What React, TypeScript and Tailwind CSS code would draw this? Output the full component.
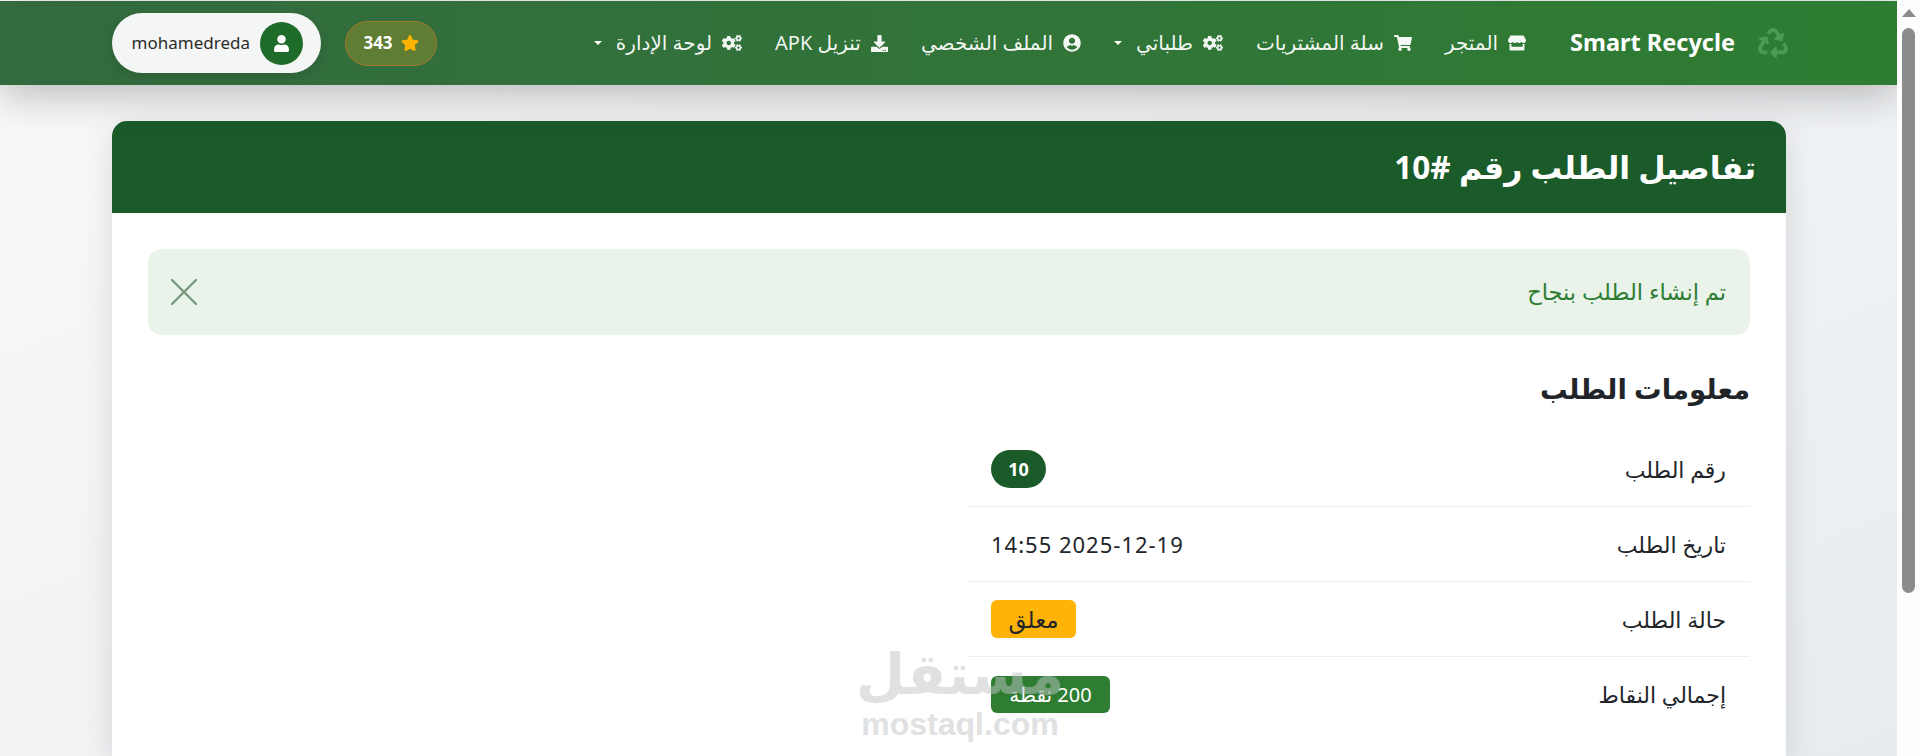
import { FaCogs, FaDownload, FaRecycle, FaShoppingCart, FaStar, FaStore, FaUser, FaUserCircle } from 'react-icons/fa';
import type { ReactNode } from 'react';

const fontStack = '[font-family:"Noto_Sans","DejaVu_Sans",sans-serif]';

function NavItem({ icon, label, caret }: { icon: ReactNode; label: string; caret?: boolean }) {
  return (
    <a className="flex items-center gap-[10px] text-[20px] whitespace-nowrap text-white/95">
      {icon}
      <span>{label}</span>
      {caret && <span className="mr-[4px] h-0 w-0 border-x-[4px] border-t-[4px] border-x-transparent border-t-white" />}
    </a>
  );
}

function InfoRow({ label, children, last }: { label: string; children: ReactNode; last?: boolean }) {
  return (
    <div className={`flex h-[75px] items-center justify-between px-[24px] ${last ? '' : 'border-b border-[#eceef0]'}`}>
      <div className="text-[22px] text-[#212529]">{label}</div>
      <div className="flex justify-end text-[22px] tracking-[1px] text-[#212529]">{children}</div>
    </div>
  );
}

export default function App() {
  return (
    <div dir="rtl" className={`flex h-[756px] flex-row overflow-hidden bg-white ${fontStack}`}>
      {/* Scrollbar */}
      <div className="flex w-[23px] shrink-0 flex-col items-center bg-[#fdfdfd]" dir="ltr">
        <div className="mt-[9px] h-0 w-0 border-x-[7px] border-b-[8px] border-x-transparent border-b-[#8a8a8a]" />
        <div className="mt-[11px] h-[565px] w-[13px] rounded-full bg-[#8b8b8b]" />
      </div>

      <div className="relative flex min-w-0 flex-1 flex-col overflow-hidden bg-gradient-to-br from-[#f8f9fa] to-[#e9ecef]">
        {/* Navbar */}
        <nav className="relative z-10 mt-px flex h-[84px] shrink-0 items-center bg-gradient-to-l from-[#2e7d32] to-[#336a3e] pr-[109px] pl-[112px] shadow-[0_10px_40px_rgba(0,0,0,0.25)]">
          <div className="flex items-center gap-[23px]">
            <FaRecycle className="text-[30px] text-[#4c9a55]" />
            <span className="text-[23.5px] font-bold whitespace-nowrap text-white">Smart Recycle</span>
          </div>
          <div className="mr-[44px] flex items-center gap-[33px]">
            <NavItem icon={<FaStore className="text-[18px]" />} label="المتجر" />
            <NavItem icon={<FaShoppingCart className="text-[18px]" />} label="سلة المشتريات" />
            <NavItem icon={<FaCogs className="text-[20px]" />} label="طلباتي" caret />
            <NavItem icon={<FaUserCircle className="text-[18px]" />} label="الملف الشخصي" />
            <NavItem icon={<FaDownload className="text-[17px]" />} label="تنزيل APK" />
            <NavItem icon={<FaCogs className="text-[20px]" />} label="لوحة الإدارة" caret />
          </div>
          <div className="mr-auto flex items-center gap-[24px]" dir="rtl">
            <div className="flex h-[45px] w-[92px] items-center justify-center gap-[8px] rounded-full border border-[#a3782a] bg-[#5f7e33]">
              <FaStar className="text-[18px] text-[#ffb300]" />
              <span className="text-[17px] font-bold text-white">343</span>
            </div>
            <div className="flex h-[60px] w-[209px] items-center gap-[10px] rounded-full bg-[#f3f6f4] pr-[18px] shadow-[0_4px_12px_rgba(0,0,0,0.12)]">
              <div className="flex h-[43px] w-[43px] items-center justify-center rounded-full bg-[#1f6b2a]">
                <FaUser className="text-[17px] text-white" />
              </div>
              <span className="text-[17px] text-[#2b2b2b]">mohamedreda</span>
            </div>
          </div>
        </nav>

        {/* Card */}
        <main className="mt-[36px] mr-[111px] ml-[112px] flex-1 rounded-t-[15px] bg-white shadow-[0_8px_32px_rgba(0,0,0,0.12)]">
          <header className="flex h-[92px] items-center rounded-t-[15px] bg-[#1b5b2a] px-[30px]">
            <h1 className="text-[31.5px] font-bold text-white">تفاصيل الطلب رقم #10</h1>
          </header>
          <div className="px-[36px] pt-[36px]">
            <div className="flex h-[86px] items-center justify-between rounded-[14px] bg-[#e9f3ea] px-[24px] text-[#2e7d32]">
              <span className="text-[22.5px]">تم إنشاء الطلب بنجاح</span>
              <svg width="26" height="26" viewBox="0 0 26 26" className="ml-[-1px] text-[#77977b]">
                <path d="M1 1 L25 25 M25 1 L1 25" stroke="currentColor" strokeWidth="2.4" strokeLinecap="round" />
              </svg>
            </div>
            <h2 className="mt-[36px] text-[27.5px] leading-[36px] font-bold text-[#212529]">معلومات الطلب</h2>
            <div className="mt-[25px] w-[783px]">
              <InfoRow label="رقم الطلب">
                <span className="flex h-[38px] w-[55px] items-center justify-center rounded-full bg-[#1b5b2a] text-[18px] font-bold tracking-normal text-white">10</span>
              </InfoRow>
              <InfoRow label="تاريخ الطلب">
                <span dir="ltr">14:55 2025-12-19</span>
              </InfoRow>
              <InfoRow label="حالة الطلب">
                <span className="flex h-[38px] w-[85px] items-center justify-center rounded-[6px] bg-[#ffb307] text-[23px] tracking-normal text-[#212529]">معلق</span>
              </InfoRow>
              <InfoRow label="إجمالي النقاط" last>
                <span className="flex h-[37px] w-[119px] items-center justify-center rounded-[6px] bg-[#2e7d32] text-[20px] tracking-normal text-white">200 نقطة</span>
              </InfoRow>
            </div>
          </div>
        </main>

        {/* Watermark */}
        <div dir="ltr" className="pointer-events-none absolute top-[636px] left-[860px] z-20 flex w-[200px] flex-col items-center text-[#c0c4c8] opacity-50">
          <span dir="rtl" className="text-[57px] leading-[72px] font-bold">مستقل</span>
          <span className="text-[32px] leading-[32px] font-bold [font-family:'Liberation_Sans',sans-serif]">mostaql.com</span>
        </div>
      </div>
    </div>
  );
}
